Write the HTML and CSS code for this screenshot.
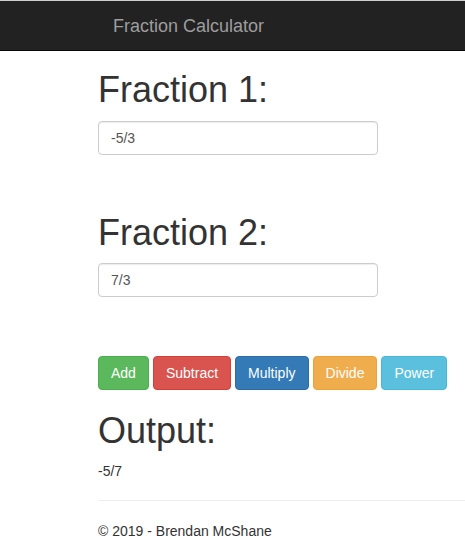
FILE: index.html
```html
<!DOCTYPE html>
<html lang="en">
<head>
<meta charset="utf-8">
<title>Fraction Calculator</title>
<link rel="stylesheet" href="styles.css">
</head>
<body>
<header class="navbar">
  <a class="brand" href="#">Fraction Calculator</a>
</header>
<main class="body-content">
  <section class="fraction-block">
    <h1 class="heading">Fraction 1:</h1>
    <input class="form-control" type="text" value="-5/3">
  </section>
  <section class="fraction-block second">
    <h1 class="heading">Fraction 2:</h1>
    <input class="form-control" type="text" value="7/3">
  </section>
  <div class="btn-row">
    <button class="btn btn-success">Add</button>
    <button class="btn btn-danger">Subtract</button>
    <button class="btn btn-primary">Multiply</button>
    <button class="btn btn-warning">Divide</button>
    <button class="btn btn-info">Power</button>
  </div>
  <h1 class="heading output-heading">Output:</h1>
  <p class="output">-5/7</p>
  <hr class="rule">
  <footer class="footer">
    <p class="footer-text">&copy; 2019 - Brendan McShane</p>
  </footer>
</main>
</body>
</html>
```

FILE: styles.css
```css
html, body {
  margin: 0;
  padding: 0;
}

body {
  font-family: "Liberation Sans", Arial, Helvetica, sans-serif;
  font-size: 14px;
  line-height: 20px;
  color: #333;
  background: #fff;
  overflow: hidden;
}

.navbar {
  display: block;
  height: 49px;
  background: #222;
  border-top: 1px solid #cfcfcf;
  border-bottom: 1px solid #080808;
}

.brand {
  display: block;
  padding: 15px 0 0 113px;
  font-size: 18px;
  line-height: 20px;
  color: #9d9d9d;
  text-decoration: none;
}

.body-content {
  margin-left: 98px;
}

.heading {
  font-size: 36px;
  font-weight: 400;
  line-height: 1.1;
  margin: 19px 0 11px;
}

.fraction-block.second .heading {
  margin-top: 58px;
}

.form-control {
  display: block;
  box-sizing: border-box;
  width: 280px;
  height: 34px;
  padding: 6px 12px;
  margin: 0;
  font-family: inherit;
  font-size: 14px;
  line-height: 20px;
  color: #555;
  background: #fff;
  border: 1px solid #ccc;
  border-radius: 4px;
  box-shadow: inset 0 1px 1px rgba(0, 0, 0, 0.075);
}

.btn-row {
  display: flex;
  gap: 4px;
  margin-top: 59px;
}

.btn {
  display: block;
  padding: 6px 12px;
  margin: 0;
  font-family: inherit;
  font-size: 14px;
  line-height: 20px;
  color: #fff;
  border: 1px solid transparent;
  border-radius: 4px;
  cursor: pointer;
}

.btn-success { background: #5cb85c; border-color: #4cae4c; }
.btn-danger  { background: #d9534f; border-color: #d43f3a; }
.btn-primary { background: #337ab7; border-color: #2e6da4; }
.btn-warning { background: #f0ad4e; border-color: #eea236; }
.btn-info    { background: #5bc0de; border-color: #46b8da; }

.output-heading {
  margin-top: 21px;
  margin-bottom: 10px;
}

.output {
  margin: 0;
}

.rule {
  margin: 19px 0 20px;
  border: 0;
  border-top: 1px solid #eee;
  height: 0;
}

.footer-text {
  margin: 0;
}
```
